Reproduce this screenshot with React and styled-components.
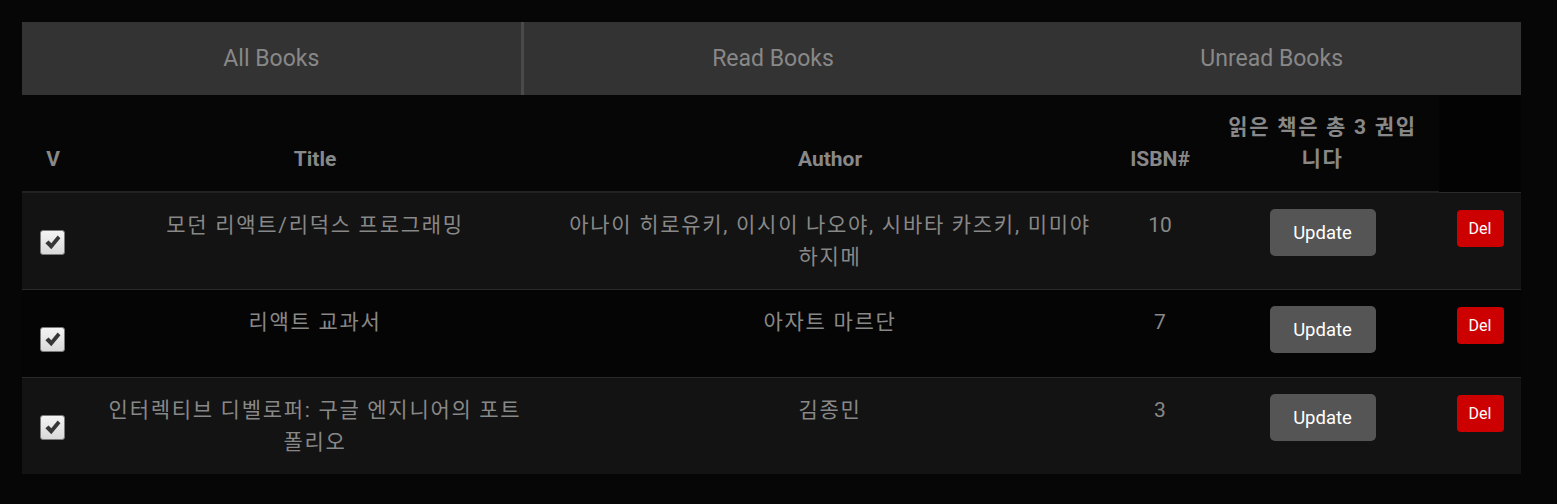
import styled, { createGlobalStyle } from 'styled-components'

const GlobalStyle = createGlobalStyle`
    body {
        margin: 0;
        background-color: #060606;
        font-family: Roboto, "Noto Sans CJK KR", sans-serif;
    }
`

const Page = styled.div`
    padding: 22px 36px 30px 22px;
`

const TabBar = styled.div`
    display: flex;
    height: 73px;
`

const Tab = styled.div`
    flex: 1 1 0;
    box-sizing: border-box;
    display: flex;
    align-items: center;
    justify-content: center;
    background-color: #333;
    color: #888;
    font-size: 23px;
    cursor: pointer;
    border-right: ${({ $divider }) => ($divider ? '3px solid #4a4a4a' : 'none')};
`

const Table = styled.table`
    width: 100%;
    border-collapse: collapse;
    table-layout: fixed;
    background-color: #030303;
    color: #888;
`

const Th = styled.th`
    padding: 16px;
    vertical-align: bottom;
    font-size: 21px;
    font-weight: 700;
    line-height: 32px;
    letter-spacing: ${({ $hangul }) => ($hangul ? '1.7px' : 'normal')};
    background-color: #060606;
    border-bottom: 2px solid #222;
`

const Row = styled.tr`
    background-color: ${({ $odd }) => ($odd ? '#131313' : '#050505')};
    border-top: 1px solid #2a2a2a;
`

const Td = styled.td`
    padding: 16px;
    vertical-align: top;
    text-align: center;
    font-size: 21px;
    line-height: 32px;
    letter-spacing: ${({ $hangul }) => ($hangul ? '1.7px' : 'normal')};
`

const Check = styled.span`
    display: block;
    width: 23px;
    height: 23px;
    margin: 21px auto 0;
    position: relative;
    left: -1px;
    border: 1px solid #7a7a7a;
    border-radius: 3px;
    background: linear-gradient(#f4f4f4, #d9d9d9);
    svg {
        display: block;
        margin: 2px auto 0;
    }
`

const UpdateButton = styled.button`
    display: block;
    margin: 0 auto 8px;
    width: 106px;
    height: 47px;
    border: none;
    border-radius: 5px;
    background-color: #555;
    color: #fff;
    font-family: Roboto, sans-serif;
    font-size: 18.5px;
    font-weight: 400;
    cursor: pointer;
`

const DelButton = styled.button`
    display: block;
    margin: 1px auto 0;
    width: 47px;
    height: 37px;
    border: none;
    border-radius: 4px;
    background-color: #cc0000;
    color: #fff;
    font-family: Roboto, sans-serif;
    font-size: 16px;
    cursor: pointer;
`

const books = [
    { title: '모던 리액트/리덕스 프로그래밍', author: '아나이 히로유키, 이시이 나오야, 시바타 카즈키, 미미야 하지메', isbn: 10 },
    { title: '리액트 교과서', author: '아자트 마르단', isbn: 7 },
    { title: '인터렉티브 디벨로퍼: 구글 엔지니어의 포트폴리오', author: '김종민', isbn: 3 },
]

function CheckMark() {
    return (
        <svg width="19" height="19" viewBox="0 0 24 24">
            <path d="M3 13 L7 9.5 L10.5 13 L18.5 3 L22 6.5 L10.5 20.5 Z" fill="#363636" />
        </svg>
    )
}

function App() {
    return (
        <Page>
            <GlobalStyle />
            <TabBar>
                <Tab $divider>All Books</Tab>
                <Tab>Read Books</Tab>
                <Tab>Unread Books</Tab>
            </TabBar>
            <Table>
                <colgroup>
                    <col style={{ width: 62 }} />
                    <col style={{ width: 462 }} />
                    <col style={{ width: 568 }} />
                    <col style={{ width: 92 }} />
                    <col style={{ width: 233 }} />
                    <col style={{ width: 82 }} />
                </colgroup>
                <thead>
                    <tr>
                        <Th>V</Th>
                        <Th>Title</Th>
                        <Th>Author</Th>
                        <Th>ISBN#</Th>
                        <Th $hangul>읽은 책은 총 {books.length} 권입니다</Th>
                    </tr>
                </thead>
                <tbody>
                    {books.map((book, i) => (
                        <Row key={book.isbn} $odd={i % 2 === 0}>
                            <Td>
                                <Check><CheckMark /></Check>
                            </Td>
                            <Td $hangul>{book.title}</Td>
                            <Td $hangul>{book.author}</Td>
                            <Td>{book.isbn}</Td>
                            <Td>
                                <UpdateButton>Update</UpdateButton>
                            </Td>
                            <Td>
                                <DelButton>Del</DelButton>
                            </Td>
                        </Row>
                    ))}
                </tbody>
            </Table>
        </Page>
    )
}

export default App
